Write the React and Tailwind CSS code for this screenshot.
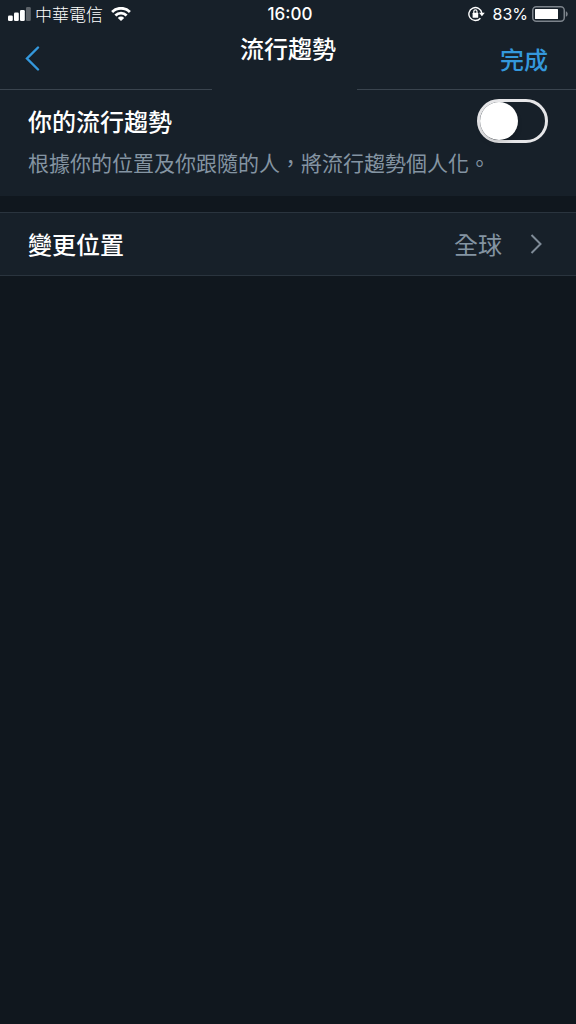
import { useState } from 'react';

function SignalIcon() {
  return (
    <svg width="23" height="14" viewBox="0 0 23 14" fill="#fff" aria-hidden="true">
      <rect x="0" y="8.5" width="4.8" height="5.5" rx="1.3" />
      <rect x="6" y="5.5" width="4.8" height="8.5" rx="1.3" />
      <rect x="12" y="3" width="4.8" height="11" rx="1.3" />
      <rect x="18" y="0" width="4.8" height="14" rx="1.3" fillOpacity="0.3" />
    </svg>
  );
}

function WifiIcon() {
  return (
    <svg width="20" height="14" viewBox="0 0 20 14" aria-hidden="true">
      <g fill="none" stroke="#fff" strokeWidth="2.8">
        <path d="M1.1 4.9a12.7 12.7 0 0 1 17.8 0" />
        <path d="M4.4 8.4a8 8 0 0 1 11.2 0" />
      </g>
      <path d="M6.8 10.9a4.5 4.5 0 0 1 6.4 0L10 14z" fill="#fff" />
    </svg>
  );
}

function RotationLockIcon() {
  return (
    <svg width="17" height="16" viewBox="0 0 17 16" aria-hidden="true">
      <path
        d="M12.4 12.2A6.5 6.5 0 1 1 13.8 7"
        fill="none"
        stroke="#fff"
        strokeWidth="1.4"
      />
      <path d="M11 6.8h5.8l-2.900 3.500z" fill="#fff" />
      <rect x="4.6" y="6.8" width="5.6" height="4.900" rx="0.5" fill="#fff" />
      <path d="M5.8 7V5.500a1.600 1.600 0 0 1 3.200 0V7" fill="none" stroke="#fff" strokeWidth="1.2" />
    </svg>
  );
}

function BatteryIcon() {
  return (
    <svg width="36" height="16" viewBox="0 0 36 16" aria-hidden="true">
      <rect x="0.75" y="0.75" width="31.5" height="14.5" rx="3.5" fill="none" stroke="#7c838b" strokeWidth="1.5" />
      <rect x="3" y="3" width="23" height="10" rx="0.5" fill="#fff" />
      <path d="M33.8 5.2c1.4.5 1.9 1.6 1.9 2.8s-.5 2.3-1.9 2.8z" fill="#7c838b" />
    </svg>
  );
}

function StatusBar() {
  return (
    <div className="grid h-7 grid-cols-[1fr_auto_1fr] items-center px-2 text-[17px] leading-7">
      <div className="flex items-center">
        <SignalIcon />
        <span className="ml-1 font-light">中華電信</span>
        <span className="ml-2">
          <WifiIcon />
        </span>
      </div>
      <time className="pl-1 font-[Inter] font-medium">16:00</time>
      <div className="flex items-center justify-end">
        <RotationLockIcon />
        <span className="ml-2 font-[Inter] text-base">83%</span>
        <span className="ml-1">
          <BatteryIcon />
        </span>
      </div>
    </div>
  );
}

function NavBar() {
  return (
    <header>
      <nav className="grid h-[61px] grid-cols-[1fr_auto_1fr] items-center px-6">
        <button type="button" aria-label="返回" className="justify-self-start">
          <svg width="16" height="26" viewBox="0 0 16 26" fill="none" stroke="#3498dc" strokeWidth="2.4" strokeLinecap="round" aria-hidden="true">
            <path d="M14 1.5L3 12.5L14 23.5" />
          </svg>
        </button>
        <h1 className="self-start leading-10 font-medium">流行趨勢</h1>
        <button type="button" className="mr-1 justify-self-end font-medium text-[#3498dc]">
          完成
        </button>
      </nav>
      {/* Divider is broken under the title */}
      <div className="grid h-px grid-cols-[212fr_145px_219fr]">
        <span className="bg-[#3a444e]" />
        <span />
        <span className="bg-[#3a444e]" />
      </div>
    </header>
  );
}

export default function App() {
  const [personalized, setPersonalized] = useState(false);

  return (
    <div className="min-h-screen bg-[#10171e] font-['Noto_Sans_CJK_TC',sans-serif] text-2xl text-white" lang="zh-Hant">
      <div className="bg-[#172029]">
        <StatusBar />
        <NavBar />
      </div>

      <main>
        <section className="bg-[#172029] px-7 pt-2 pb-4">
          <div className="flex h-[46px] items-center justify-between">
            <label htmlFor="personalized" className="leading-10 font-medium">
              你的流行趨勢
            </label>
            <input
              id="personalized"
              type="checkbox"
              role="switch"
              aria-describedby="personalized-help"
              checked={personalized}
              onChange={(e) => setPersonalized(e.target.checked)}
              className="flex h-11 w-[71px] appearance-none items-center rounded-full border-3 border-[#e6e6e8] before:size-[38px] before:rounded-full before:bg-white before:shadow-md checked:justify-end checked:bg-[#3498dc]"
            />
          </div>
          <p id="personalized-help" className="text-[21px] leading-9 text-[#8494a2]">
            根據你的位置及你跟隨的人，將流行趨勢個人化。
          </p>
        </section>

        <a
          href="#location"
          className="mt-4 flex h-16 items-center border-y border-[#2a343e] bg-[#172029] px-7"
        >
          <span className="font-medium">變更位置</span>
          <span className="ml-auto text-[#8494a2]">全球</span>
          <svg className="ml-7" width="18" height="20" viewBox="0 0 18 20" fill="none" stroke="#7f8b97" strokeWidth="2" aria-hidden="true">
            <path d="M1.5 1L10.5 10L1.5 19" />
          </svg>
        </a>
      </main>
    </div>
  );
}
